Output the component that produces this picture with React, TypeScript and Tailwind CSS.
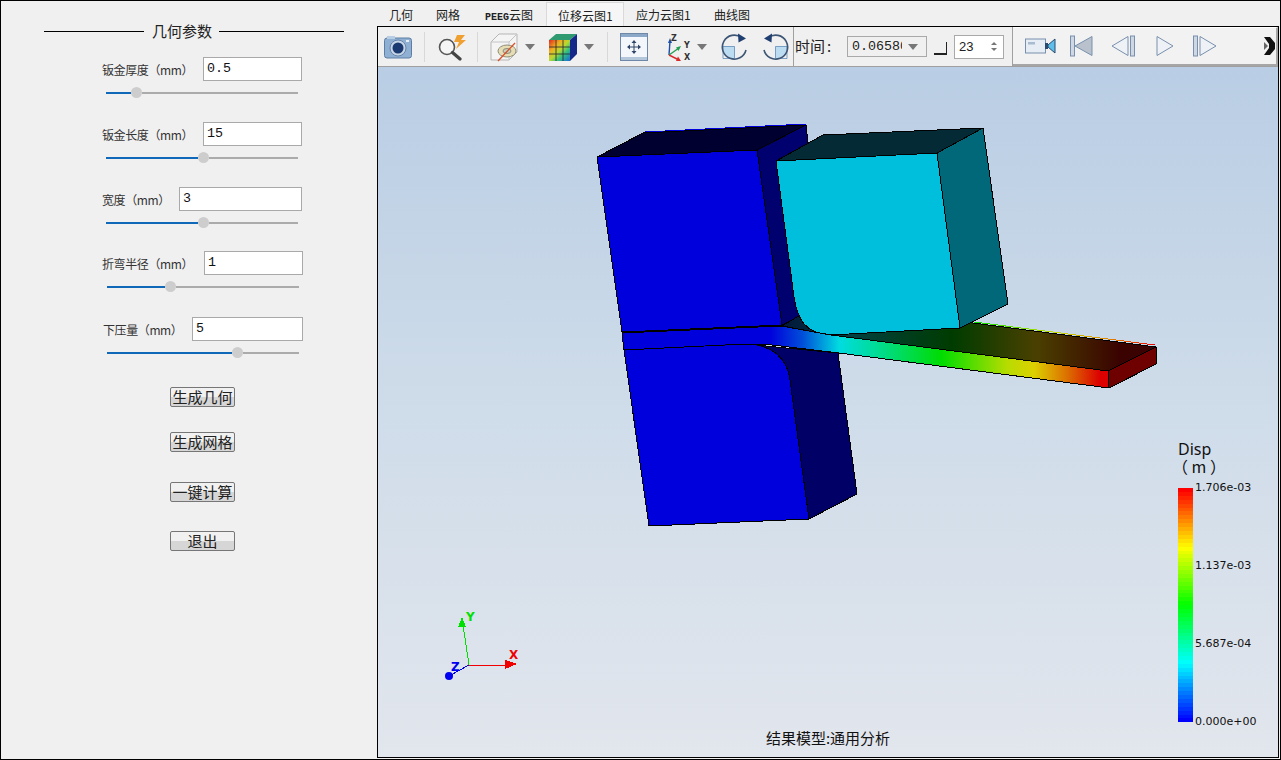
import type { ReactNode } from "react";

const CJK = "font-['Noto_Sans_CJK_SC','Noto_Sans',sans-serif]";

const TABS: { label: ReactNode; width: string; active?: boolean }[] = [
  { label: "几何", width: "w-[47px]" },
  { label: "网格", width: "w-[49px]" },
  {
    label: (
      <>
        <span className="font-['Liberation_Mono',monospace] text-[10px] font-bold">PEEG</span>云图
      </>
    ),
    width: "w-[73px]",
  },
  { label: "位移云图1", width: "w-[78px]", active: true },
  { label: "应力云图1", width: "w-[78px]" },
  { label: "曲线图", width: "w-[60px]" },
];

// label, value, left margin of the row, input width, slider filled px, gap to input
const PARAMS = [
  { label: "钣金厚度（mm）", value: "0.5", inputLeft: "ml-[101px]", labelWidth: "w-[101px]", input: "w-[99px]", fill: 25, sliderLeft: "ml-[105px]", rowTop: "mt-[16px]" },
  { label: "钣金长度（mm）", value: "15", inputLeft: "ml-[101px]", labelWidth: "w-[101px]", input: "w-[99px]", fill: 92, sliderLeft: "ml-[105px]", rowTop: "mt-[24px]" },
  { label: "宽度（mm）", value: "3", inputLeft: "ml-[101px]", labelWidth: "w-[77px]", input: "w-[123px]", fill: 92, sliderLeft: "ml-[105px]", rowTop: "mt-[24px]" },
  { label: "折弯半径（mm）", value: "1", inputLeft: "ml-[101px]", labelWidth: "w-[102px]", input: "w-[99px]", fill: 58, sliderLeft: "ml-[106px]", rowTop: "mt-[23px]" },
  { label: "下压量（mm）", value: "5", inputLeft: "ml-[102px]", labelWidth: "w-[89px]", input: "w-[111px]", fill: 125, sliderLeft: "ml-[106px]", rowTop: "mt-[25px]" },
];

const BUTTONS = [
  { label: "生成几何", top: "mt-[29px]" },
  { label: "生成网格", top: "mt-[25px]" },
  { label: "一键计算", top: "mt-[30px]" },
  { label: "退出", top: "mt-[29px]" },
];

const LEGEND_LABELS = ["1.706e-03", "1.137e-03", "5.687e-04", "0.000e+00"];

function Slider({ fill, className }: { fill: number; className: string }) {
  return (
    <div className={`flex w-[192px] items-center h-[11px] ${className}`}>
      <div className="h-[2px] bg-[#0f68b8]" style={{ width: fill }} />
      <div className="h-[11px] w-[11px] shrink-0 rounded-full bg-[#cdcdcd]" />
      <div className="h-[2px] flex-1 bg-[#ababab]" />
    </div>
  );
}

function Param({ p }: { p: (typeof PARAMS)[number] }) {
  return (
    <div className={p.rowTop}>
      <div className={`flex items-center ${p.inputLeft}`}>
        <div className={`h-[24px] ${p.labelWidth} ${CJK} text-[12px] leading-[26px] tracking-[-0.4px] text-[#333]`}>{p.label}</div>
        <div className={`h-[24px] ${p.input} border border-[#a9a9a9] bg-white pl-[3px] font-['Liberation_Mono',monospace] text-[13.33px] leading-[22px] text-[#111]`}>
          {p.value}
        </div>
      </div>
      <Slider fill={p.fill} className={`${p.sliderLeft} mt-[6px]`} />
    </div>
  );
}

function LeftPanel() {
  return (
    <div className="flex w-[376px] shrink-0 flex-col">
      <div className="ml-[43px] mt-[20px] flex h-[20px] items-center">
        <div className="h-px w-[100px] bg-black" />
        <div className={`ml-[8px] w-[67px] ${CJK} text-[15px] leading-[20px] text-[#222]`}>几何参数</div>
        <div className="h-px w-[125px] bg-black" />
      </div>
      {PARAMS.map((p) => (
        <Param key={p.label} p={p} />
      ))}
      {BUTTONS.map((b) => (
        <div
          key={b.label}
          className={`${b.top} ml-[169px] h-[20px] w-[65px] rounded-[2px] border border-[#767676] bg-[linear-gradient(#f1f1f1_0%,#f1f1f1_50%,#d6d6d6_50%,#d6d6d6_100%)] text-center ${CJK} text-[15px] leading-[18px] text-[#222]`}
        >
          {b.label}
        </div>
      ))}
    </div>
  );
}

function Caret({ className }: { className: string }) {
  return (
    <svg width="10" height="6" viewBox="0 0 10 6" className={className}>
      <path d="M0 0H10L5 6Z" fill="#777" />
    </svg>
  );
}

function Camera() {
  return (
    <svg width="28" height="24" viewBox="0 0 28 24" className="ml-[6px] shrink-0">
      <rect x="0.5" y="3" width="27" height="20" rx="2.5" fill="#8fb0d2" stroke="#5d7ea5" />
      <rect x="3" y="1" width="8" height="3" fill="#b7cde3" />
      <rect x="22" y="5" width="3" height="2" fill="#e8eef5" />
      <circle cx="14" cy="13" r="8" fill="#c7d6e6" stroke="#6685aa" />
      <circle cx="14" cy="13" r="5.5" fill="#1c3a72" />
    </svg>
  );
}

function Search() {
  return (
    <svg width="30" height="28" viewBox="0 0 30 28" className="ml-[12px] shrink-0">
      <circle cx="10" cy="14" r="7.5" fill="#f5f5f5" stroke="#555" strokeWidth="1.6" />
      <path d="M15.5 19.5L23 26" stroke="#444" strokeWidth="3.2" strokeLinecap="round" />
      <path d="M20 2H28L24 7H29L19 16L22 9H17Z" fill="#f0a030" />
    </svg>
  );
}

function GhostBox() {
  return (
    <svg width="28" height="30" viewBox="0 0 28 30" className="ml-[12px] shrink-0">
      <path d="M1 10L9 2H27V20L19 28H1Z" fill="#f4f4f4" stroke="#b5b5b5" />
      <path d="M1 10H19V28M19 10L27 2" fill="none" stroke="#c4c4c4" />
      <ellipse cx="17" cy="19" rx="9" ry="6" fill="#e7ddb4" stroke="#8e8e78" />
      <ellipse cx="17" cy="19" rx="4" ry="2.5" fill="#c9d0c0" stroke="#8e8e78" />
      <path d="M8 29L25 11" stroke="#d8502c" strokeWidth="1.3" />
    </svg>
  );
}

function ColorCube() {
  return (
    <svg width="28" height="28" viewBox="0 0 28 28" className="ml-[14px] shrink-0">
      <defs>
        <linearGradient id="cubeFront" x1="0" y1="0" x2="1" y2="1">
          <stop offset="0" stopColor="#e02820" />
          <stop offset="0.3" stopColor="#f0b020" />
          <stop offset="0.5" stopColor="#b8d830" />
          <stop offset="0.7" stopColor="#30c080" />
          <stop offset="1" stopColor="#1868d8" />
        </linearGradient>
      </defs>
      <path d="M0 7L7 1H28L21 7Z" fill="#2f9a70" />
      <path d="M21 7L28 1V21L21 28Z" fill="#14288a" />
      <rect x="0" y="7" width="21" height="21" fill="url(#cubeFront)" />
      <path d="M0 14H21M0 21H21M7 7V28M14 7V28" stroke="#223" strokeWidth="0.8" />
    </svg>
  );
}

function FitWindow() {
  return (
    <svg width="28" height="28" viewBox="0 0 28 28" className="ml-[12px] shrink-0">
      <rect x="0.5" y="0.5" width="27" height="27" fill="#f3f6fa" stroke="#6f88a8" />
      <rect x="1" y="1" width="26" height="3" fill="#8ca8c8" />
      <rect x="1" y="24" width="26" height="3" fill="#b4c6da" />
      <path d="M14 8V20M8 14H20" stroke="#2f4468" />
      <path d="M14 7L11.5 10H16.5ZM14 21L11.5 18H16.5ZM7 14L10 11.5V16.5ZM21 14L18 11.5V16.5Z" fill="#2f4468" />
    </svg>
  );
}

function AxesIcon() {
  return (
    <svg width="28" height="28" viewBox="0 0 28 28" className="ml-[17px] shrink-0">
      <path d="M4 22L5 8" stroke="#1b4fa8" strokeWidth="1.4" />
      <path d="M5 5L3 10H7Z" fill="#1b4fa8" />
      <path d="M4 22L14 15" stroke="#20a050" strokeWidth="1.4" />
      <path d="M16 13L11 14.5L13.5 18Z" fill="#20a050" />
      <path d="M4 22L14 27" stroke="#d82c2c" strokeWidth="1.4" />
      <path d="M16 28L11 28L13 23.5Z" fill="#d82c2c" />
      <text x="6" y="8" className="font-['DejaVu_Sans',sans-serif] text-[8px] font-bold" fill="#333">Z</text>
      <text x="19" y="15" className="font-['DejaVu_Sans',sans-serif] text-[8px] font-bold" fill="#333">Y</text>
      <text x="19" y="27" className="font-['DejaVu_Sans',sans-serif] text-[8px] font-bold" fill="#333">X</text>
    </svg>
  );
}

function Rotate({ flip, className }: { flip?: boolean; className: string }) {
  return (
    <svg width="27" height="27" viewBox="0 0 27 27" className={className}>
      <g transform={flip ? "translate(27 0) scale(-1 1)" : undefined}>
        <path d="M13.5 13.5H2C2 20 7 25.5 13.5 25.5Z" fill="#bcdcf2" />
        <path d="M13.5 13.5V25.5H2V13.5Z" fill="none" stroke="#4d7fb0" strokeWidth="0.7" />
        <path d="M20.5 4.5A12 12 0 1 0 25 17" fill="none" stroke="#3d5575" strokeWidth="1.6" />
        <path d="M17 0.5L25 5.5L17.5 9.5Z" fill="#1f3f70" />
      </g>
    </svg>
  );
}

function VideoCam() {
  return (
    <svg width="31" height="18" viewBox="0 0 31 18" className="ml-[12px] shrink-0">
      <rect x="0.5" y="2" width="20" height="14" fill="#e6edf4" stroke="#7890ad" />
      <rect x="3" y="5" width="7" height="2.5" fill="#a9bbcf" />
      <rect x="20" y="6" width="3" height="6" fill="#2a4a70" />
      <path d="M23 8L30 2V16L23 10Z" fill="#5ec0ea" stroke="#2a4a70" />
    </svg>
  );
}

function Transport() {
  return (
    <>
      <svg width="23" height="22" viewBox="0 0 23 22" className="ml-[14px] shrink-0">
        <rect x="0.5" y="1" width="4" height="20" fill="#cfd8e2" stroke="#7890ad" />
        <path d="M22 1.5V20.5L5 11Z" fill="#b9c2cc" stroke="#7890ad" />
      </svg>
      <svg width="24" height="22" viewBox="0 0 24 22" className="ml-[18px] shrink-0">
        <path d="M17 1.5V20.5L1 11Z" fill="#eef2f6" stroke="#7890ad" />
        <rect x="19.5" y="1" width="4" height="20" fill="#cfd8e2" stroke="#7890ad" />
      </svg>
      <svg width="18" height="22" viewBox="0 0 18 22" className="ml-[21px] shrink-0">
        <path d="M1 1.5V20.5L17 11Z" fill="#eef2f6" stroke="#7890ad" />
      </svg>
      <svg width="24" height="22" viewBox="0 0 24 22" className="ml-[19px] shrink-0">
        <rect x="0.5" y="1" width="4" height="20" fill="#cfd8e2" stroke="#7890ad" />
        <path d="M7 1.5V20.5L23 11Z" fill="#eef2f6" stroke="#7890ad" />
      </svg>
      <svg width="11" height="18" viewBox="0 0 11 18" className="ml-[47px] shrink-0">
        <path d="M0 0H6L11 6V12L6 18H0L5 11V7Z" fill="#111" />
        <path d="M0 5L4 9L0 13Z" fill="#666" />
      </svg>
    </>
  );
}

function Toolbar() {
  return (
    <div className="flex h-[40px] shrink-0 items-center border-b border-[#a0a0a0] bg-[#f0f0f0]">
      <Camera />
      <div className="ml-[12px] h-[30px] w-px bg-[#d8d8d8]" />
      <Search />
      <div className="ml-[10px] h-[30px] w-px bg-[#d8d8d8]" />
      <GhostBox />
      <Caret className="ml-[7px] shrink-0" />
      <ColorCube />
      <Caret className="ml-[7px] shrink-0" />
      <div className="ml-[13px] h-[30px] w-px bg-[#d8d8d8]" />
      <FitWindow />
      <AxesIcon />
      <Caret className="ml-[4px] shrink-0" />
      <Rotate className="ml-[14px] shrink-0" />
      <Rotate flip className="ml-[14px] shrink-0" />
      <div className="ml-[4px] h-full w-px bg-[#a0a0a0]" />
      <div className={`ml-px w-[52px] shrink-0 ${CJK} text-[15px] text-[#222]`}>
        时间<span className="ml-[2px]">:</span>
      </div>
      <div className="flex h-[21px] w-[80px] shrink-0 items-center overflow-hidden border border-[#a9a9a9] bg-[#f0f0f0] pl-[4px] font-['Liberation_Mono',monospace] text-[13.33px] text-[#222]">
        <span className="w-[50px] overflow-hidden whitespace-nowrap">0.06580</span>
        <Caret className="ml-[6px] shrink-0" />
      </div>
      <div className="ml-[7px] mt-[3px] h-[13px] w-[13px] shrink-0 border-b-2 border-r border-[#222]" />
      <div className="ml-[7px] flex h-[24px] w-[50px] shrink-0 items-center justify-between border border-[#a9a9a9] bg-white pl-[4px] pr-[6px] font-['Liberation_Sans',sans-serif] text-[13px] text-[#222]">
        <span>23</span>
        <span className="flex flex-col gap-[3px]">
          <span className="h-0 w-0 border-x-[3px] border-b-[3px] border-x-transparent border-b-[#777]" />
          <span className="h-0 w-0 border-x-[3px] border-t-[3px] border-x-transparent border-t-[#777]" />
        </span>
      </div>
      <div className="ml-[8px] h-full w-px bg-[#a0a0a0]" />
      <div className="flex h-full flex-1 items-center border-b-2 border-r-2 border-[#a6a6a6] border-t border-t-white bg-[#f2f2f2]">
        <VideoCam />
        <Transport />
      </div>
    </div>
  );
}

function Model() {
  return (
    <svg viewBox="378 67 900 690" width="900" height="690" className="absolute left-0 top-0" shapeRendering="crispEdges">
      <defs>
        <linearGradient id="stripFront" gradientUnits="userSpaceOnUse" x1="770" y1="0" x2="1100" y2="0">
          <stop offset="0" stopColor="#0000dc" />
          <stop offset="0.1" stopColor="#0050d8" />
          <stop offset="0.21" stopColor="#00dce0" />
          <stop offset="0.33" stopColor="#00dc90" />
          <stop offset="0.52" stopColor="#00dc00" />
          <stop offset="0.72" stopColor="#b8dc00" />
          <stop offset="0.8" stopColor="#dcd000" />
          <stop offset="0.9" stopColor="#dc7000" />
          <stop offset="1" stopColor="#dc0000" />
        </linearGradient>
        <linearGradient id="stripTop" gradientUnits="userSpaceOnUse" x1="785" y1="0" x2="1120" y2="0">
          <stop offset="0" stopColor="#02183c" />
          <stop offset="0.2" stopColor="#004040" />
          <stop offset="0.5" stopColor="#003c00" />
          <stop offset="0.75" stopColor="#4a4000" />
          <stop offset="1" stopColor="#3a0200" />
        </linearGradient>
        <linearGradient id="stripEdge" gradientUnits="userSpaceOnUse" x1="973" y1="0" x2="1156" y2="0">
          <stop offset="0" stopColor="#00e000" />
          <stop offset="0.45" stopColor="#c8dc00" />
          <stop offset="0.75" stopColor="#e08000" />
          <stop offset="1" stopColor="#e80000" />
        </linearGradient>
      </defs>
      <path d="M645 132L806 124" stroke="#0000dc" fill="none" />
      <g stroke="#000" strokeWidth="1" strokeLinejoin="round">
        {/* upper die */}
        <path d="M597 157L643 133L806 125L757 150Z" fill="#000030" />
        <path d="M757 150L806 125L826 300L800 316L782 325Z" fill="#00006e" />
        <path d="M597 157L757 150L782 325L622 332Z" fill="#0000dc" />
        {/* lower die */}
        <path d="M745 344L838 353L857 494L809 519L790 380C788 362 778 347 745 344Z" fill="#000066" />
        <path d="M624 350L745 344C772 344 787 358 790 380L809 519L649 526Z" fill="#0000dc" />
        {/* sheet top, then the punch that sits on it */}
        <path d="M782 326L812 308L973 323L1156 347L1108 371L831 335Z" fill="url(#stripTop)" />
        <path d="M776 161L823 135L983 128L937 153Z" fill="#032a35" />
        <path d="M937 153L983 128L1008 304L960 328Z" fill="#006878" />
        <path d="M776 161L937 153L960 328L830 335C805 334 797 318 794 297Z" fill="#00bfdd" />
        {/* sheet front */}
        <path d="M622 333L781 326L831 335L1108 371L1109 388L839 353L764 344L745 344L624 350Z" fill="url(#stripFront)" />
        <path d="M1108 371L1156 347V364L1109 388Z" fill="#6e0000" />
      </g>
      <path d="M974 322L1155 345" stroke="url(#stripEdge)" fill="none" />
      {/* triad */}
      <g fill="none" strokeWidth="1">
        <path d="M469 665L463 625" stroke="#00e000" />
        <path d="M469 665H506" stroke="#f00000" />
        <path d="M469 665L451 675" stroke="#0000f0" />
      </g>
      <path d="M462 617L458 627H466Z" fill="#00e000" />
      <path d="M517 664L505 660V669Z" fill="#f00000" />
      <circle cx="449" cy="676" r="4" fill="#0000f0" shapeRendering="auto" />
      <g className="font-['DejaVu_Sans',sans-serif] text-[12px] font-bold" shapeRendering="auto">
        <text x="466" y="621" fill="#00e000">Y</text>
        <text x="509" y="659" fill="#f00000">X</text>
        <text x="451" y="671" fill="#0000f0">Z</text>
      </g>
    </svg>
  );
}

function bandColor(t: number) {
  // blue -> cyan -> green -> yellow -> red
  const seg = Math.min(3, Math.floor(t * 4));
  const f = t * 4 - seg;
  const v = Math.round(f * 255);
  if (seg === 0) return `rgb(0,${v},255)`;
  if (seg === 1) return `rgb(0,255,${255 - v})`;
  if (seg === 2) return `rgb(${v},255,0)`;
  return `rgb(255,${255 - v},0)`;
}

function Legend() {
  const bands = Array.from({ length: 60 }, (_, i) => i);
  return (
    <div className="absolute bottom-[28px] left-[800px] text-[#111]">
      <div className="font-['Noto_Sans',sans-serif] text-[16px] leading-[18px]">Disp</div>
      <div className={`-ml-[6px] ${CJK} text-[16px] leading-[17px]`}>（ m ）</div>
      <div className="mt-[6px] flex">
        <div className="mt-[7px] mb-[7px] flex h-[234px] w-[15px] flex-col">
          {bands.map((i) => (
            <div key={i} className="flex-1" style={{ backgroundColor: bandColor(1 - i / 59) }} />
          ))}
        </div>
        <div className="ml-[2px] flex flex-col justify-between font-['DejaVu_Sans',sans-serif] text-[11px] leading-[14px]">
          {LEGEND_LABELS.map((l) => (
            <div key={l}>{l}</div>
          ))}
        </div>
      </div>
    </div>
  );
}

function Viewport() {
  return (
    <div className="relative flex-1 overflow-hidden bg-[linear-gradient(#b9cde4,#cddbe9_45%,#e2e6ed)]">
      <Model />
      <Legend />
      <div className={`absolute bottom-[9px] left-0 w-[900px] text-center ${CJK} text-[15px] leading-[20px] text-[#111]`}>
        结果模型:通用分析
      </div>
    </div>
  );
}

export default function App() {
  return (
    <div className="flex h-[760px] w-[1281px] overflow-hidden border border-black bg-[#f0f0f0]">
      <LeftPanel />
      <div className="flex w-[902px] shrink-0 flex-col">
        <div className={`flex h-[25px] shrink-0 items-end ${CJK} text-[12px] text-[#222]`}>
          {TABS.map((t, i) => (
            <div
              key={i}
              className={`${t.width} h-[24px] shrink-0 whitespace-nowrap pt-[4px] leading-[18px] ${
                t.active ? "border border-b-0 border-[#d9d9d9] bg-[#f6f6f6] pl-[11px]" : "pl-[12px]"
              }`}
            >
              {t.label}
            </div>
          ))}
        </div>
        <div className="flex h-[732px] flex-col border border-black">
          <Toolbar />
          <Viewport />
        </div>
      </div>
    </div>
  );
}
